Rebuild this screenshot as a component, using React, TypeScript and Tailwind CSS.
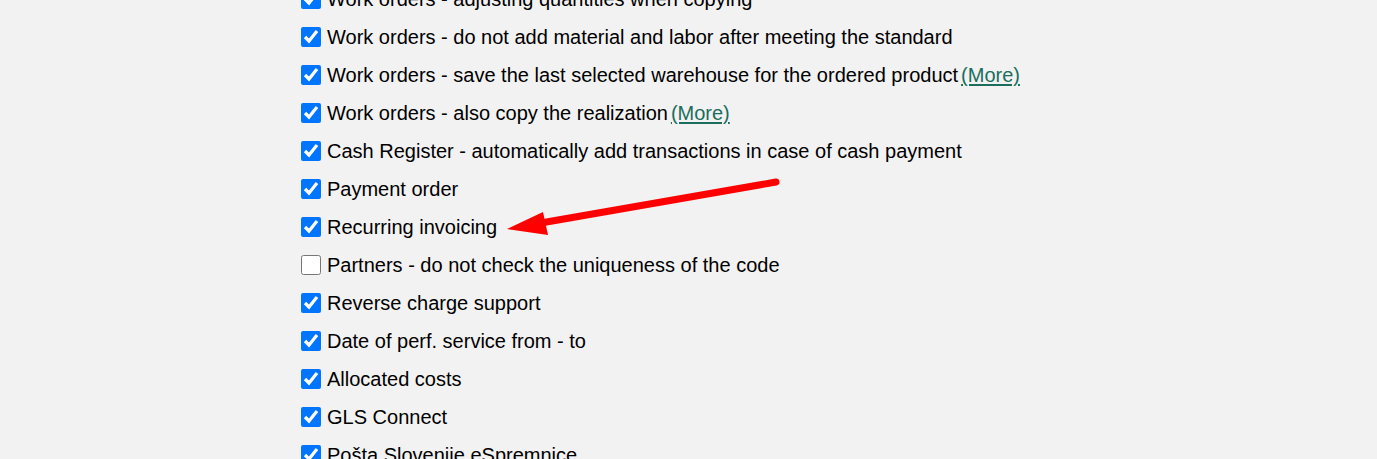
type Item = {
  label: string;
  checked: boolean;
  more?: boolean;
};

const items: Item[] = [
  { label: "Work orders - adjusting quantities when copying", checked: true },
  { label: "Work orders - do not add material and labor after meeting the standard", checked: true },
  { label: "Work orders - save the last selected warehouse for the ordered product", checked: true, more: true },
  { label: "Work orders - also copy the realization", checked: true, more: true },
  { label: "Cash Register - automatically add transactions in case of cash payment", checked: true },
  { label: "Payment order", checked: true },
  { label: "Recurring invoicing", checked: true },
  { label: "Partners - do not check the uniqueness of the code", checked: false },
  { label: "Reverse charge support", checked: true },
  { label: "Date of perf. service from - to", checked: true },
  { label: "Allocated costs", checked: true },
  { label: "GLS Connect", checked: true },
  { label: "Pošta Slovenije eSpremnice", checked: true },
];

export default function App() {
  return (
    <div
      className="relative w-full h-[459px] overflow-hidden bg-[#f2f2f2] text-black"
      style={{ fontFamily: '"Liberation Sans", Arial, sans-serif' }}
    >
      <div className="-mt-[20px] pl-[301px] flex flex-col">
        {items.map((item) => (
          <label key={item.label} className="h-[38px] flex items-center">
            <input
              type="checkbox"
              defaultChecked={item.checked}
              className="w-5 h-5 m-0 accent-[#0075ff]"
            />
            <span className="ml-[6px] text-[20px] leading-none">{item.label}</span>
            {item.more && (
              <a href="#" className="ml-[3px] text-[20px] leading-none text-[#1b6e5d] underline underline-offset-2">
                (More)
              </a>
            )}
          </label>
        ))}
      </div>
      <svg
        className="absolute left-0 top-0 pointer-events-none"
        width="1377"
        height="459"
        viewBox="0 0 1377 459"
      >
        <line x1="776" y1="182" x2="535" y2="224" stroke="#ff0000" strokeWidth="7" strokeLinecap="round" />
        <polygon points="507,229 543,212 548,235" fill="#ff0000" />
      </svg>
    </div>
  );
}
